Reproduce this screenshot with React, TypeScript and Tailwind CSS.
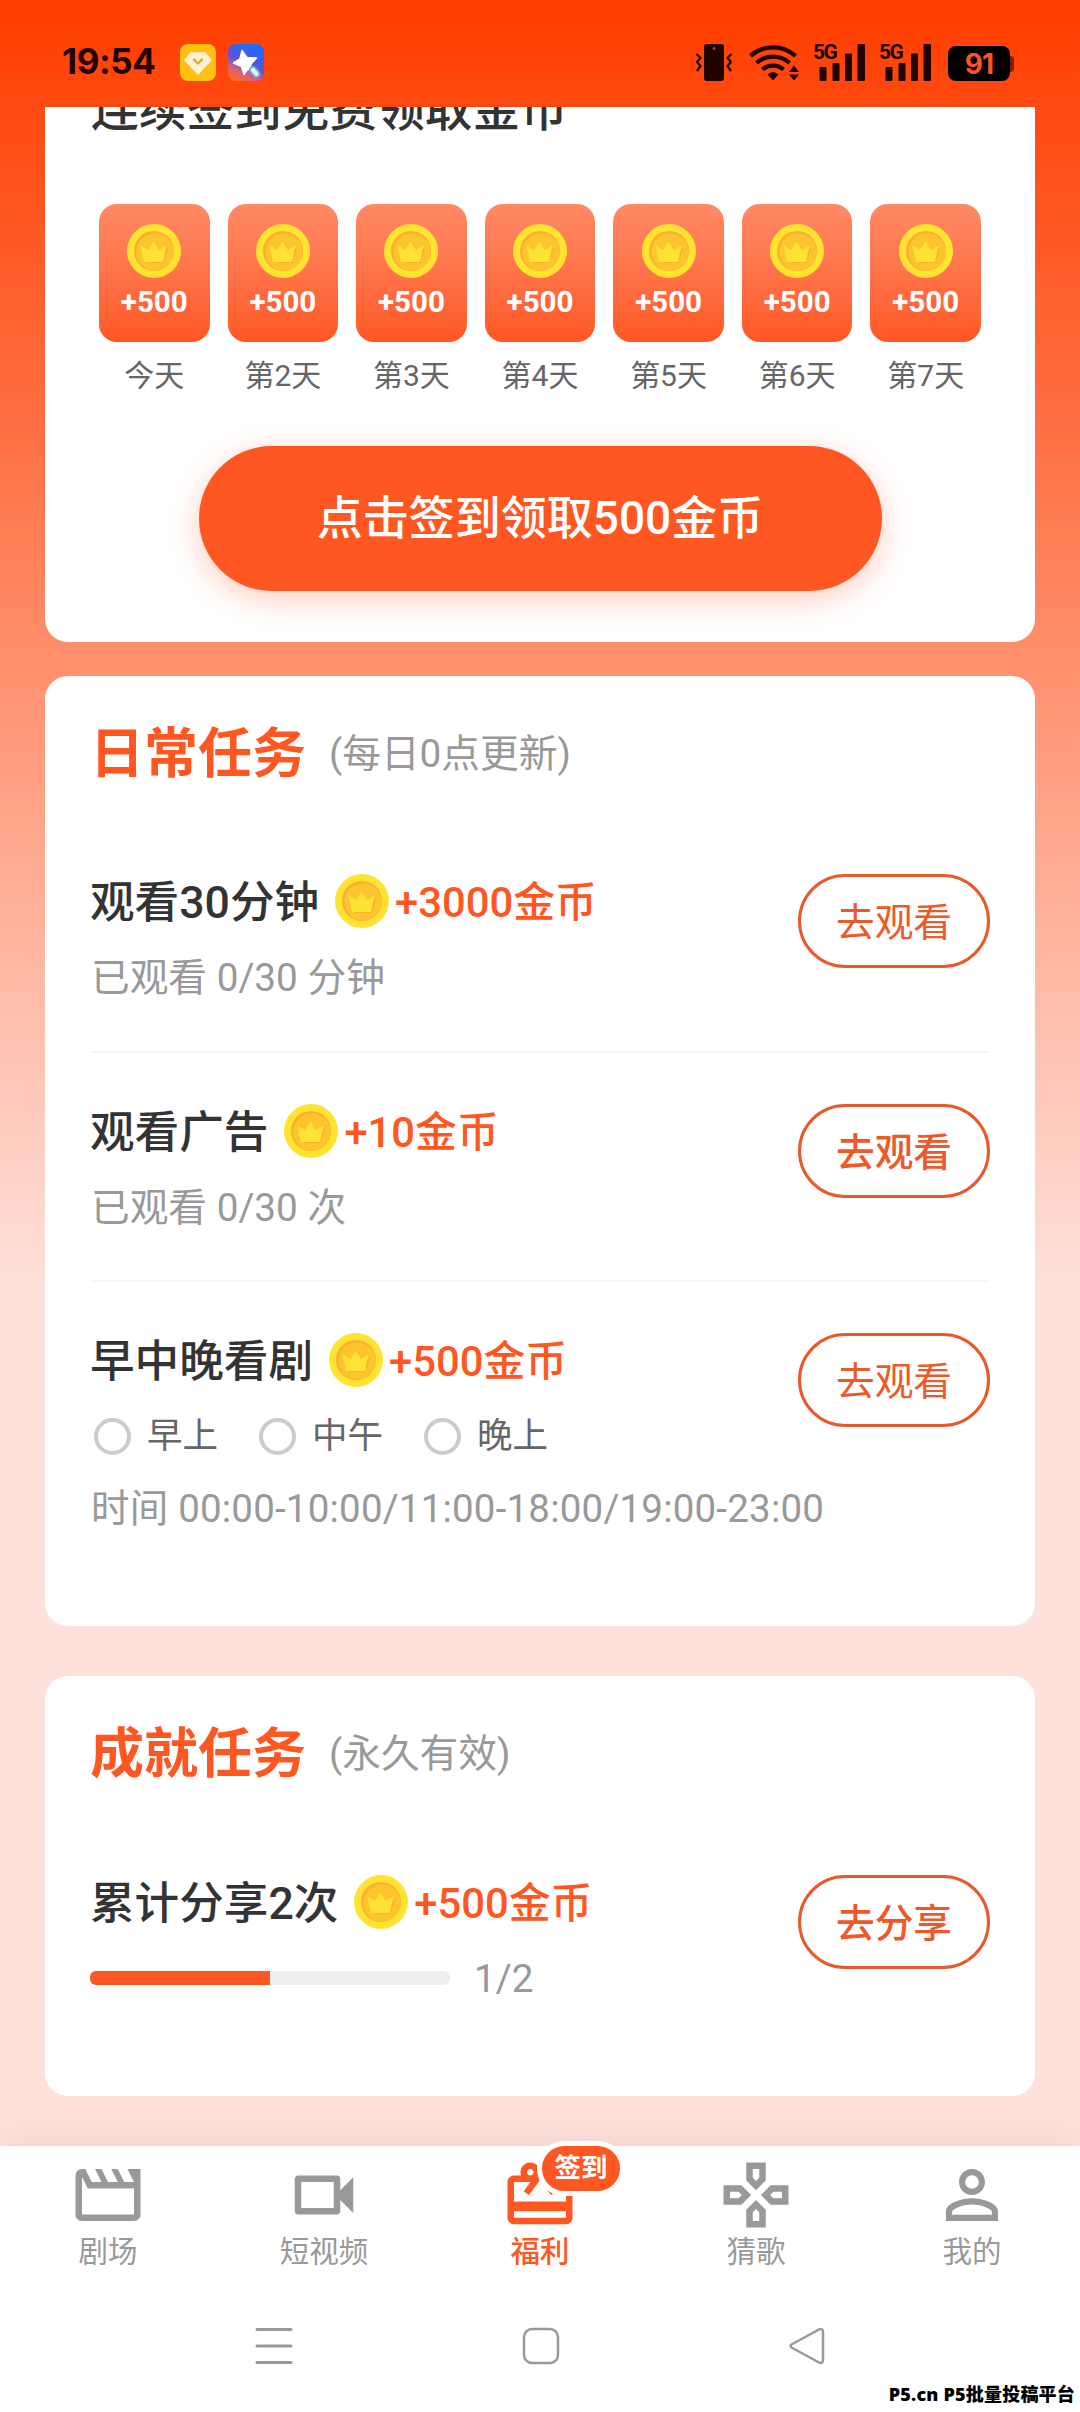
import { clsx } from 'clsx'
import type { ReactNode } from 'react'
import { MdOutlineGamepad, MdOutlineVideocam, MdPersonOutline, MdRedeem } from 'react-icons/md'

interface TaskRowProps {
  title: string
  reward: string
  action: string
  strong?: boolean
  children: ReactNode
}

const days = ['今天', '第2天', '第3天', '第4天', '第5天', '第6天', '第7天']

const slots = ['早上', '中午', '晚上']

const tabs = [
  { label: '剧场', icon: ClapperIcon },
  { label: '短视频', icon: MdOutlineVideocam },
  { label: '福利', icon: MdRedeem, active: true, badge: '签到' },
  { label: '猜歌', icon: MdOutlineGamepad },
  { label: '我的', icon: MdPersonOutline },
]

function ClapperIcon({ className }: { className?: string }) {
  return (
    <svg viewBox="0 0 24 24" className={className} fill="currentColor">
      <path d="M4 6.470L5.760 10H20v8H4V6.470M22 4h-4l2 4h-3l-2-4h-2l2 4h-3l-2-4H8l2 4H7L5 4H4c-1.100 0-1.990.900-1.990 2L2 18c0 1.100.900 2 2 2h16c1.100 0 2-.9 2-2V4z" />
    </svg>
  )
}

function Coin() {
  return (
    <svg viewBox="0 0 54 54" className="size-[54px] shrink-0">
      <circle cx="27" cy="27" r="27" fill="#fee431" />
      <circle cx="27" cy="27" r="20" fill="#f9b02f" />
      <circle cx="28" cy="28" r="18.600" fill="#fec42f" />
      <path d="M15.500 24l7.500 3 5.500-6 5.500 6 7.500-3-5 15H20z" fill="#f7b52e" />
      <path d="M13.500 21.500l7.500 4.500 5.500-8.500 5.500 8.500 7.500-4.500-3.500 16.500H17z" fill="#ffe334" />
    </svg>
  )
}

function Signal() {
  return (
    <div className="relative h-[37px] w-[51px]">
      <span className="absolute -top-[3px] -left-px text-[21px] leading-[22px] font-bold tracking-[-1.5px]">5G</span>
      <svg viewBox="0 0 51 37" className="absolute inset-0" fill="currentColor">
        <rect x="5.500" y="23" width="7" height="14" rx="1" />
        <rect x="18.500" y="19" width="7" height="18" rx="1" />
        <rect x="31" y="9.500" width="7" height="27.500" rx="1" />
        <rect x="43.500" y="0" width="7.500" height="37" rx="1" />
      </svg>
    </div>
  )
}

function StatusBar() {
  return (
    <header className="flex h-[107px] shrink-0 items-start pt-[44px] pr-[66px] pl-[62px] text-[#210300]">
      <span className="h-[37px] w-[118px] font-[Inter] text-[35px] leading-[35px] font-bold tracking-[-0.4px]">19:54</span>
      <svg viewBox="0 0 36 37" className="h-[37px] w-[36px]">
        <rect width="36" height="37" rx="8" fill="#ffc012" />
        <path d="M11 9h14l6 7-13 14L5 16z" fill="#fff0d2" stroke="#fff0d2" strokeWidth="1.500" strokeLinejoin="round" />
        <path d="M14 15.500l4 4 4-4" fill="none" stroke="#e9a21e" strokeWidth="2.200" strokeLinecap="round" strokeLinejoin="round" />
      </svg>
      <svg viewBox="0 0 36 37" className="ml-3 h-[37px] w-[36px]">
        <defs>
          <linearGradient id="star-bg" x1="0.200" y1="1" x2="0.700" y2="0">
            <stop offset="0" stopColor="#ff6a1e" />
            <stop offset="0.250" stopColor="#d9607a" />
            <stop offset="0.500" stopColor="#5a55d8" />
            <stop offset="1" stopColor="#1a6cff" />
          </linearGradient>
        </defs>
        <rect width="36" height="37" rx="8" fill="url(#star-bg)" />
        <path d="M14 6.500l5 7 9.500.500-6 6.500 1.500 6-4.500-1-3.500 5-2.500-8-8-3.500 6.500-4z" fill="#fff" stroke="#fff" strokeWidth="1.500" strokeLinejoin="round" />
        <path d="M25 26l3.500 4" stroke="#6ba3c4" strokeWidth="8" strokeLinecap="round" />
        <path d="M25 26l3.500 4" stroke="#e4eef0" strokeWidth="4.500" strokeLinecap="round" />
      </svg>
      <div className="flex-1" />
      <svg viewBox="0 0 36 37" className="h-[37px] w-[36px]" fill="none" stroke="currentColor">
        <rect x="8" y="0" width="20" height="37" rx="3" fill="currentColor" stroke="none" />
        <circle cx="18" cy="4.500" r="1.400" fill="#b5401a" stroke="none" />
        <path d="M0.500 10l4 4-3.500 4 3.500 4-3.500 5M35.500 10l-4 4 3.500 4-3.500 4 3.500 5" strokeWidth="2.200" />
      </svg>
      <svg viewBox="0 0 50 37" className="ml-[17px] h-[37px] w-[50px]" fill="none" stroke="currentColor" strokeWidth="4.300">
        <path d="M1.500 11.800a34 34 0 0 1 45 0M7.500 18.800a25 25 0 0 1 33 0M13.500 25.500a16 16 0 0 1 21 0" />
        <path d="M18.500 30.500q5.500-5 11 0L24 36.500z" fill="currentColor" stroke="none" />
        <path d="M40 28l5-6.500 5 6.500zM40 30.500h10l-5 6z" fill="currentColor" stroke="none" />
      </svg>
      <div className="ml-[15px] flex gap-[15px]">
        <Signal />
        <Signal />
      </div>
      <div className="mt-[2px] ml-[17px] flex items-center">
        <div className="flex h-[35px] w-[62px] items-center justify-center rounded-[8px] bg-black font-[Inter] text-[28px] leading-none font-bold tracking-[-1px] text-[#ff5422]">91</div>
        <div className="h-[16px] w-[4px] rounded-r-full bg-[#7d1f08]" />
      </div>
    </header>
  )
}

function SectionTitle({ title, note }: { title: string; note: string }) {
  return (
    <div className="flex h-[60px] items-center">
      <h2 className="mt-[3px] text-[54px] leading-[60px] font-bold text-[#ff5722]">{title}</h2>
      <span className="mt-px ml-[23px] text-[38.7px] leading-[60px] text-[#999]">{note}</span>
    </div>
  )
}

function TaskRow({ title, reward, action, strong, children }: TaskRowProps) {
  return (
    <div className="flex justify-between">
      <div>
        <div className="flex h-[54px] items-center">
          <h3 className="mt-[3px] text-[44.6px] leading-[54px] font-medium text-[#333]">{title}</h3>
          <div className="ml-[16px] flex items-center">
            <Coin />
            <span className="mt-[3px] ml-[6px] text-[41.8px] leading-[54px] font-medium text-[#ff5722]">{reward}</span>
          </div>
        </div>
        {children}
      </div>
      <button
        className={clsx(
          'h-[94px] w-[192px] shrink-0 rounded-full border-3 border-[#e85a2c] pt-[2px] text-[38.7px] leading-[88px] text-[#ec5a2a]',
          strong ? 'font-medium' : 'font-normal'
        )}
      >
        {action}
      </button>
    </div>
  )
}

function CheckInCard() {
  return (
    <section className="h-[535px] shrink-0 overflow-hidden rounded-b-[23px] bg-white">
      <h2 className="-mt-[32px] ml-[46px] text-[47.7px] leading-[70px] font-medium text-[#333]">连续签到免费领取金币</h2>
      <div className="mx-[54px] mt-[59px] grid grid-cols-7 gap-[18px]">
        {days.map(day => (
          <div key={day} className="flex flex-col items-center">
            <div className="flex h-[138px] w-full flex-col items-center rounded-[18px] bg-linear-to-b from-[#ff8a65] to-[#ff5722] pt-[20px]">
              <Coin />
              <span className="mt-[6px] text-[29.5px] leading-[36px] font-bold text-white">+500</span>
            </div>
            <span className="mt-[14px] text-[30px] leading-[40px] whitespace-nowrap text-[#666]">{day}</span>
          </div>
        ))}
      </div>
      <button className="mx-auto mt-[50px] block h-[145px] w-[683px] rounded-full bg-[#ff5722] text-[46px] font-medium text-white shadow-[0_8px_30px_rgba(255,87,34,0.3)]">
        点击签到领取500金币
      </button>
    </section>
  )
}

function DailyCard() {
  return (
    <section className="mt-[34px] h-[950px] shrink-0 rounded-[23px] bg-white px-[45px] pt-[47px]">
      <SectionTitle title="日常任务" note="(每日0点更新)" />
      <div className="mt-[91px] h-[179px] border-b-2 border-[#f5f5f5]">
        <TaskRow title="观看30分钟" reward="+3000金币" action="去观看">
          <p className="mt-[25px] ml-px text-[38.7px] leading-[50px] text-[#999]">已观看 0/30 分钟</p>
        </TaskRow>
      </div>
      <div className="mt-[51px] h-[178px] border-b-2 border-[#f5f5f5]">
        <TaskRow title="观看广告" reward="+10金币" action="去观看" strong>
          <p className="mt-[25px] ml-px text-[38.7px] leading-[50px] text-[#999]">已观看 0/30 次</p>
        </TaskRow>
      </div>
      <div className="mt-[51px]">
        <TaskRow title="早中晚看剧" reward="+500金币" action="去观看">
          <div className="mt-[24px] ml-[4px] flex h-[50px] items-center">
            {slots.map(slot => (
              <div key={slot} className="flex w-[165px] items-center">
                <span className="size-[37px] rounded-full border-4 border-[#ccc]" />
                <span className="ml-[16px] text-[35.5px] leading-[50px] text-[#666]">{slot}</span>
              </div>
            ))}
          </div>
          <p className="mt-[23px] ml-px w-0 text-[38.5px] leading-[50px] tracking-[0.2px] whitespace-nowrap text-[#999]">
            时间 00:00-10:00/11:00-18:00/19:00-23:00
          </p>
        </TaskRow>
      </div>
    </section>
  )
}

function AchievementCard() {
  return (
    <section className="mt-[50px] h-[420px] shrink-0 rounded-[23px] bg-white px-[45px] pt-[47px]">
      <SectionTitle title="成就任务" note="(永久有效)" />
      <div className="mt-[92px]">
        <TaskRow title="累计分享2次" reward="+500金币" action="去分享" strong>
          <div className="mt-[24px] flex h-[50px] items-center">
            <div className="h-[14px] w-[360px] overflow-hidden rounded-[6px] bg-[#eee]">
              <div className="h-full w-1/2 bg-[#ff5722]" />
            </div>
            <span className="mt-px ml-[24px] text-[38.7px] leading-[50px] text-[#999]">1/2</span>
          </div>
        </TaskRow>
      </div>
    </section>
  )
}

function TabBar() {
  return (
    <nav className="relative grid h-[132px] shrink-0 grid-cols-5 bg-white pt-[10px]">
      {tabs.map(({ label, icon: Icon, active, badge }) => (
        <div key={label} className={clsx('relative flex flex-col items-center', active ? 'text-[#ff5722]' : 'text-[#999]')}>
          <Icon className="size-[78px]" />
          <span className={clsx('-mt-[2px] text-[29.5px] leading-[40px]', active ? 'font-medium' : 'font-normal')}>{label}</span>
          {badge && (
            <span className="absolute -top-[15px] left-[105px] flex h-[55px] w-[88px] items-center justify-center rounded-full border-5 border-white bg-[#ff5722] text-[26.5px] leading-none font-bold text-white">
              {badge}
            </span>
          )}
        </div>
      ))}
    </nav>
  )
}

function SystemNav() {
  return (
    <footer className="relative flex-1 bg-white">
      <div className="flex justify-center gap-[229px] pt-[49px] pl-px text-[#999]">
        <svg viewBox="0 0 38 38" className="size-[38px]" fill="none" stroke="currentColor" strokeWidth="3" strokeLinecap="round">
          <path d="M2 2.500h34M2 19h34M2 35.500h34" />
        </svg>
        <svg viewBox="0 0 38 38" className="size-[38px]" fill="none" stroke="currentColor" strokeWidth="2.500">
          <rect x="2" y="2" width="34" height="34" rx="8" />
        </svg>
        <svg viewBox="0 0 38 38" className="size-[38px]" fill="none" stroke="currentColor" strokeWidth="2.500" strokeLinejoin="round">
          <path d="M2.500 17.500Q0.500 19 2.500 20.500L30 35.500Q34 37 34 33V5Q34 1 30 2.500z" />
        </svg>
      </div>
      <span className="absolute right-[5px] bottom-[7px] font-['Noto_Sans','Noto_Sans_CJK_SC',sans-serif] text-[18px] leading-[22px] font-black tracking-[0.2px] whitespace-nowrap text-black">
        P5.cn P5批量投稿平台
      </span>
    </footer>
  )
}

export default function App() {
  return (
    <div className="flex h-[2412px] w-[1080px] flex-col overflow-hidden bg-[linear-gradient(180deg,#ff3d00_0px,#ff7043_430px,#ffab91_860px,#fee1da_1290px)] font-[Roboto,'Noto_Sans_CJK_SC',sans-serif]">
      <StatusBar />
      <main className="flex h-[2039px] shrink-0 flex-col px-[45px]">
        <CheckInCard />
        <DailyCard />
        <AchievementCard />
      </main>
      <div className="flex flex-1 flex-col shadow-[0_0_40px_rgba(0,0,0,0.08)]">
        <TabBar />
        <SystemNav />
      </div>
    </div>
  )
}
